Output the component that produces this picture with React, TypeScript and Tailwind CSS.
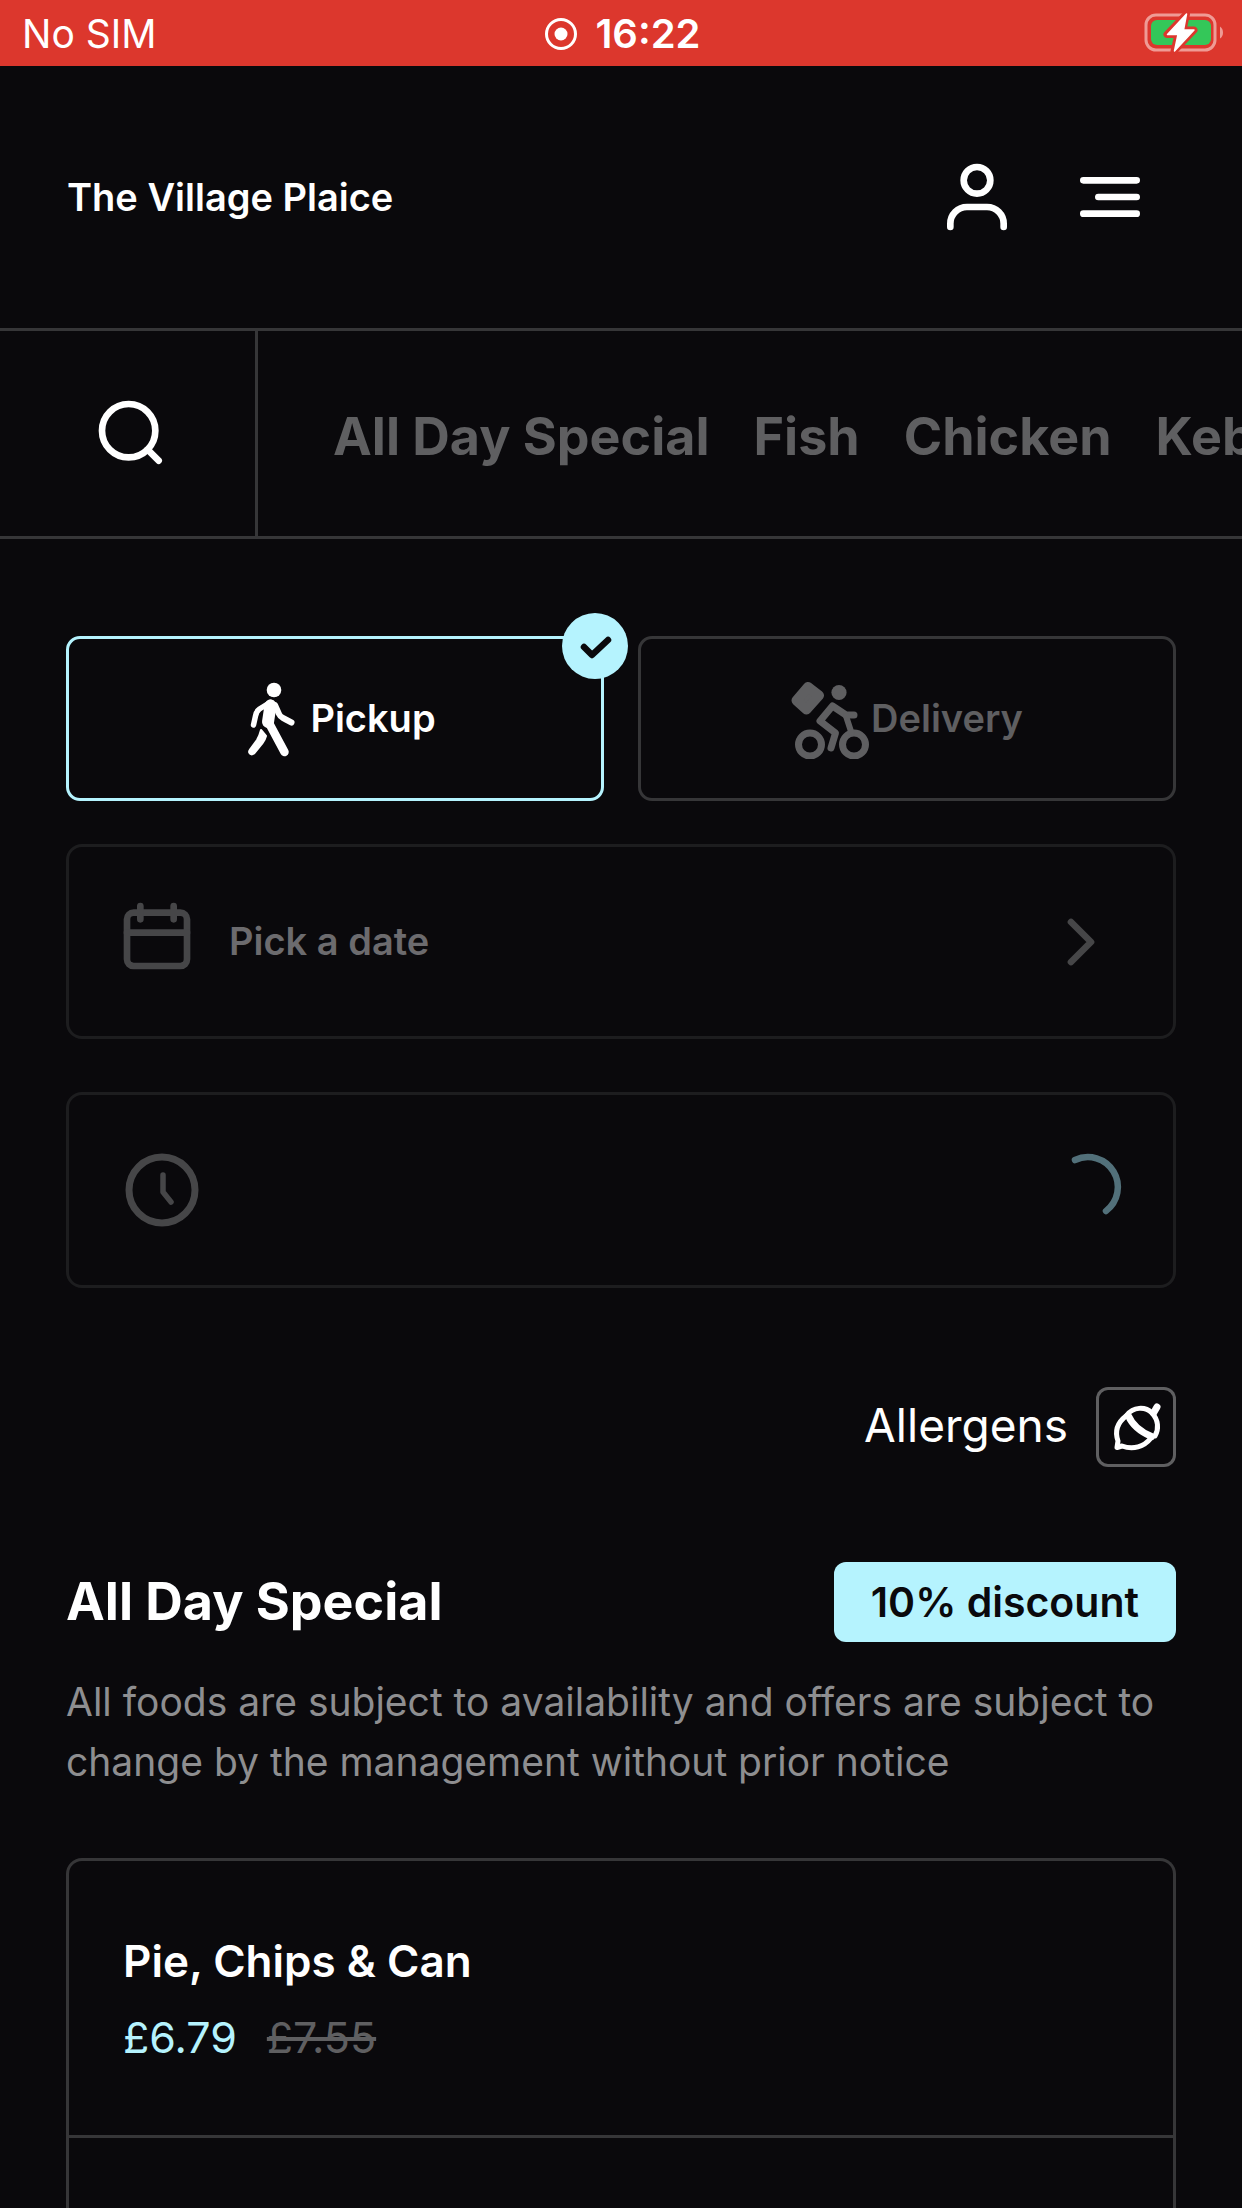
import React, { useState } from 'react';

interface MenuItem {
  id: string;
  name: string;
  price: string;
  oldPrice: string;
}

type OrderMode = 'pickup' | 'delivery';

const CATEGORIES = ['All Day Special', 'Fish', 'Chicken', 'Kebabs'];

const MENU_ITEMS: MenuItem[] = [
  { id: '1', name: 'Pie, Chips & Can', price: '£6.79', oldPrice: '£7.55' }
];

interface IconProps {
  children: React.ReactNode;
  className?: string;
}

// 24-unit outline icon
const Icon: React.FC<IconProps> = ({ children, className = '' }) => (
  <svg
    viewBox="0 0 24 24"
    fill="none"
    stroke="currentColor"
    strokeWidth="2"
    strokeLinecap="round"
    strokeLinejoin="round"
    aria-hidden="true"
    className={`size-20 shrink-0 ${className}`}
  >
    {children}
  </svg>
);

const BatteryIcon = () => (
  <svg viewBox="0 0 80 40" className="h-10 w-20 overflow-visible" aria-hidden="true">
    <rect x="2" y="2" width="69" height="35" rx="10" fill="none" stroke="#ef9b95" strokeWidth="3" />
    <path d="M76 13.500q3 2 3 6t-3 6z" fill="#ef9b95" />
    <rect x="7" y="7" width="60" height="25" rx="6" fill="#34c759" />
    <path
      d="M42.500 1 23 21.500h11l-4 16.500 20-21H39z"
      fill="#dc372d"
      stroke="#dc372d"
      strokeWidth="7"
      strokeLinejoin="round"
    />
    <path d="M42.500 1 23.500 21.500h10.500L30.500 38 50 17H39.500z" fill="#fff" stroke="#fff" strokeWidth="1.500" strokeLinejoin="round" />
  </svg>
);

const WalkIcon = () => (
  <svg
    viewBox="0 0 80 80"
    fill="none"
    stroke="currentColor"
    strokeLinecap="round"
    strokeLinejoin="round"
    className="size-20"
    aria-hidden="true"
  >
    <g transform="translate(14 1)">
      <circle cx="30" cy="10" r="7.300" fill="currentColor" stroke="none" />
      <path strokeWidth="5.500" d="M26 22.500 15.500 29Q12.500 31 11.500 36L9.500 45" />
      <path strokeWidth="12" d="M26.500 25.500 24 42" />
      <path strokeWidth="8.500" d="m25 43 15.500 29" />
      <path strokeWidth="6" d="m31 25 4 9q1 2.500 4 4l8.500 4.500" />
      <path
        fill="currentColor"
        strokeWidth="2"
        d="M17 50 22 56Q21 60 18.500 63L10 73.500Q7 75.500 5.500 73Q4.500 71.500 6 69.500L13 60Q15.500 56 17 50z"
      />
    </g>
  </svg>
);

const CourierIcon = () => (
  <svg
    viewBox="0 0 80 80"
    fill="none"
    stroke="currentColor"
    strokeWidth="7"
    strokeLinecap="round"
    strokeLinejoin="round"
    className="size-20"
    aria-hidden="true"
  >
    <g transform="translate(-2 1)">
      <path fill="currentColor" strokeWidth="10" d="m19 7 11 8.500-12.500 14L7.500 20.500z" />
      <circle cx="50" cy="12.500" r="7.600" fill="currentColor" stroke="none" />
      <circle cx="21" cy="64.500" r="11.500" />
      <circle cx="65" cy="64.500" r="11.500" />
      <path d="M65 35h-8L43.500 26 31 41l15.500 12L42 68" />
      <path strokeWidth="6" d="m57 36 5.500 17" />
    </g>
  </svg>
);

const AcornIcon = () => (
  <svg
    viewBox="0 0 80 80"
    fill="none"
    stroke="currentColor"
    strokeWidth="5"
    strokeLinecap="round"
    strokeLinejoin="round"
    className="size-20 shrink-0"
    aria-hidden="true"
  >
    <path strokeWidth="7" d="m57.500 26 3.500-6" />
    <path d="M31 28C37 20 49 19 56 26C62.500 33 63 42 59 49" />
    <path strokeWidth="7" d="M32.500 29Q38 42 55.500 49.500" />
    <path d="M30 29C21 36 18.500 44 22 54L21 60.500L26 59C37 63 48 60 55 51" />
  </svg>
);

export default function App() {
  const [mode, setMode] = useState<OrderMode>('pickup');

  return (
    <div className="flex min-h-screen flex-col overflow-hidden bg-[#0a090c] font-[Inter,'Liberation_Sans',sans-serif] text-white">
      {/* Status bar */}
      <div className="grid h-[66px] grid-cols-3 items-center bg-[#dc372d] pl-[22px] pr-[18px] text-[39px]">
        <span className="pt-0.5">No SIM</span>
        <div className="flex items-center justify-center gap-[18px] pt-0.5 text-[40px] font-semibold">
          <svg viewBox="0 0 32 32" className="size-8" aria-hidden="true">
            <circle cx="16" cy="16" r="14.500" fill="none" stroke="#fff" strokeWidth="3" />
            <circle cx="16" cy="16" r="6.500" fill="#fff" />
          </svg>
          <span>16:22</span>
        </div>
        <div className="flex justify-end">
          <BatteryIcon />
        </div>
      </div>

      {/* Header */}
      <header className="flex h-[265px] items-center border-b-3 border-[#363638] pl-[67px] pr-[92px]">
        <h1 className="text-[38px] font-semibold">The Village Plaice</h1>
        <div className="ml-auto flex gap-[53px]">
          <button aria-label="Account">
            <Icon>
              <circle cx="12" cy="7" r="4" />
              <path d="M4 21v-1a5 5 0 0 1 5-5h6a5 5 0 0 1 5 5v1" />
            </Icon>
          </button>
          <button aria-label="Menu">
            <Icon>
              <path d="M4 7h16M8.500 12H20M4 17h16" />
            </Icon>
          </button>
        </div>
      </header>

      {/* Categories */}
      <div className="flex h-[208px] border-b-3 border-[#363638]">
        <button aria-label="Search" className="shrink-0 border-r-3 border-[#363638] pl-[92px] pr-[83px]">
          <Icon>
            <circle cx="11" cy="11" r="8" />
            <path d="m20 20-3.300-3.300" />
          </Icon>
        </button>
        <nav className="flex items-center gap-11 overflow-hidden whitespace-nowrap pl-[75px] pt-1.5 text-[52px] font-bold text-[#5f5f61]">
          {CATEGORIES.map(category => (
            <a key={category} href="#menu">{category}</a>
          ))}
        </nav>
      </div>

      <main className="flex flex-1 flex-col px-[66px] pt-[97px]">
        {/* Order mode */}
        <div className="grid grid-cols-2 gap-[34px] text-[38px] font-semibold">
          <button
            onClick={() => setMode('pickup')}
            aria-pressed={mode === 'pickup'}
            className="relative flex h-[165px] items-center justify-center rounded-[14px] border-3 border-[#b5f3fe] pr-1"
          >
            <WalkIcon />
            Pickup
            <span className="absolute -right-[27px] -top-[26px] rounded-full bg-[#b5f3fe]">
              <svg viewBox="0 0 66 66" fill="none" className="size-[66px]" aria-hidden="true">
                <path d="m22 34 8 8 16-15" stroke="#0a090c" strokeWidth="6.500" strokeLinecap="round" strokeLinejoin="round" />
              </svg>
            </span>
          </button>
          <button
            onClick={() => setMode('delivery')}
            aria-pressed={mode === 'delivery'}
            className="flex h-[165px] items-center justify-center rounded-[14px] border-3 border-[#363638] text-[#5f5f61]"
          >
            <CourierIcon />
            Delivery
          </button>
        </div>

        {/* Date and time */}
        <button className="mt-[43px] flex h-[195px] items-center rounded-2xl border-3 border-[#1d1d1f] pl-12 pr-[52px] text-[#464648]">
          <Icon className="mb-3">
            <rect x="3" y="5" width="18" height="16" rx="2" />
            <path d="M7 3v4M17 3v4M3 11h18" />
          </Icon>
          <span className="ml-8 text-[38px] font-semibold text-[#6c6b6e]">Pick a date</span>
          <Icon className="ml-auto">
            <path d="m9 6 6 6-6 6" />
          </Icon>
        </button>
        <button
          aria-label="Pick a time"
          className="mt-[53px] flex h-[196px] items-center justify-between rounded-2xl border-3 border-[#1d1d1f] px-[53px] text-[#464648]"
        >
          <svg viewBox="0 0 80 80" fill="none" stroke="currentColor" strokeLinecap="round" strokeLinejoin="round" className="size-20" aria-hidden="true">
            <circle cx="40" cy="40" r="33" strokeWidth="7" />
            <path d="M41 25v17l8 10" strokeWidth="5.500" />
          </svg>
          <svg viewBox="0 0 66 66" fill="none" className="size-[66px] overflow-visible" aria-hidden="true">
            <path d="M21 3A30 30 0 0 1 52 54" stroke="#52707a" strokeWidth="6.500" strokeLinecap="round" />
          </svg>
        </button>

        {/* Allergens */}
        <div className="mt-[99px] flex items-center justify-end gap-7">
          <span className="pb-1 text-[46px]">Allergens</span>
          <button aria-label="Show allergens" className="rounded-xl ring-3 ring-inset ring-[#5f5f61]">
            <AcornIcon />
          </button>
        </div>

        {/* Menu section */}
        <section id="menu" className="mt-[95px] flex flex-1 flex-col">
          <div className="flex items-center justify-between">
            <h2 className="text-[52px] font-bold leading-[80px]">All Day Special</h2>
            <span className="rounded-xl bg-[#b5f3fe] px-[37px] text-[41px] font-semibold leading-[80px] text-[#0a090c]">
              10% discount
            </span>
          </div>
          <p className="mt-[30px] text-[39px] leading-[60px] text-[#8e8e90]">
            All foods are subject to availability and offers are subject to change by the management without prior notice
          </p>

          <ul className="mt-[66px] flex-1 rounded-t-2xl border-3 border-b-0 border-[#363638]">
            {MENU_ITEMS.map(item => (
              <li key={item.id} className="border-b-3 border-[#363638] px-[54px] pb-[66px] pt-[68px]">
                <h3 className="text-[44px] font-semibold leading-[64px]">{item.name}</h3>
                <div className="mt-3 flex gap-[30px] text-[43px] leading-[64px]">
                  <span className="text-[#b5f3fe]">{item.price}</span>
                  <s className="text-[#5f5f61]">{item.oldPrice}</s>
                </div>
              </li>
            ))}
          </ul>
        </section>
      </main>
    </div>
  );
}
